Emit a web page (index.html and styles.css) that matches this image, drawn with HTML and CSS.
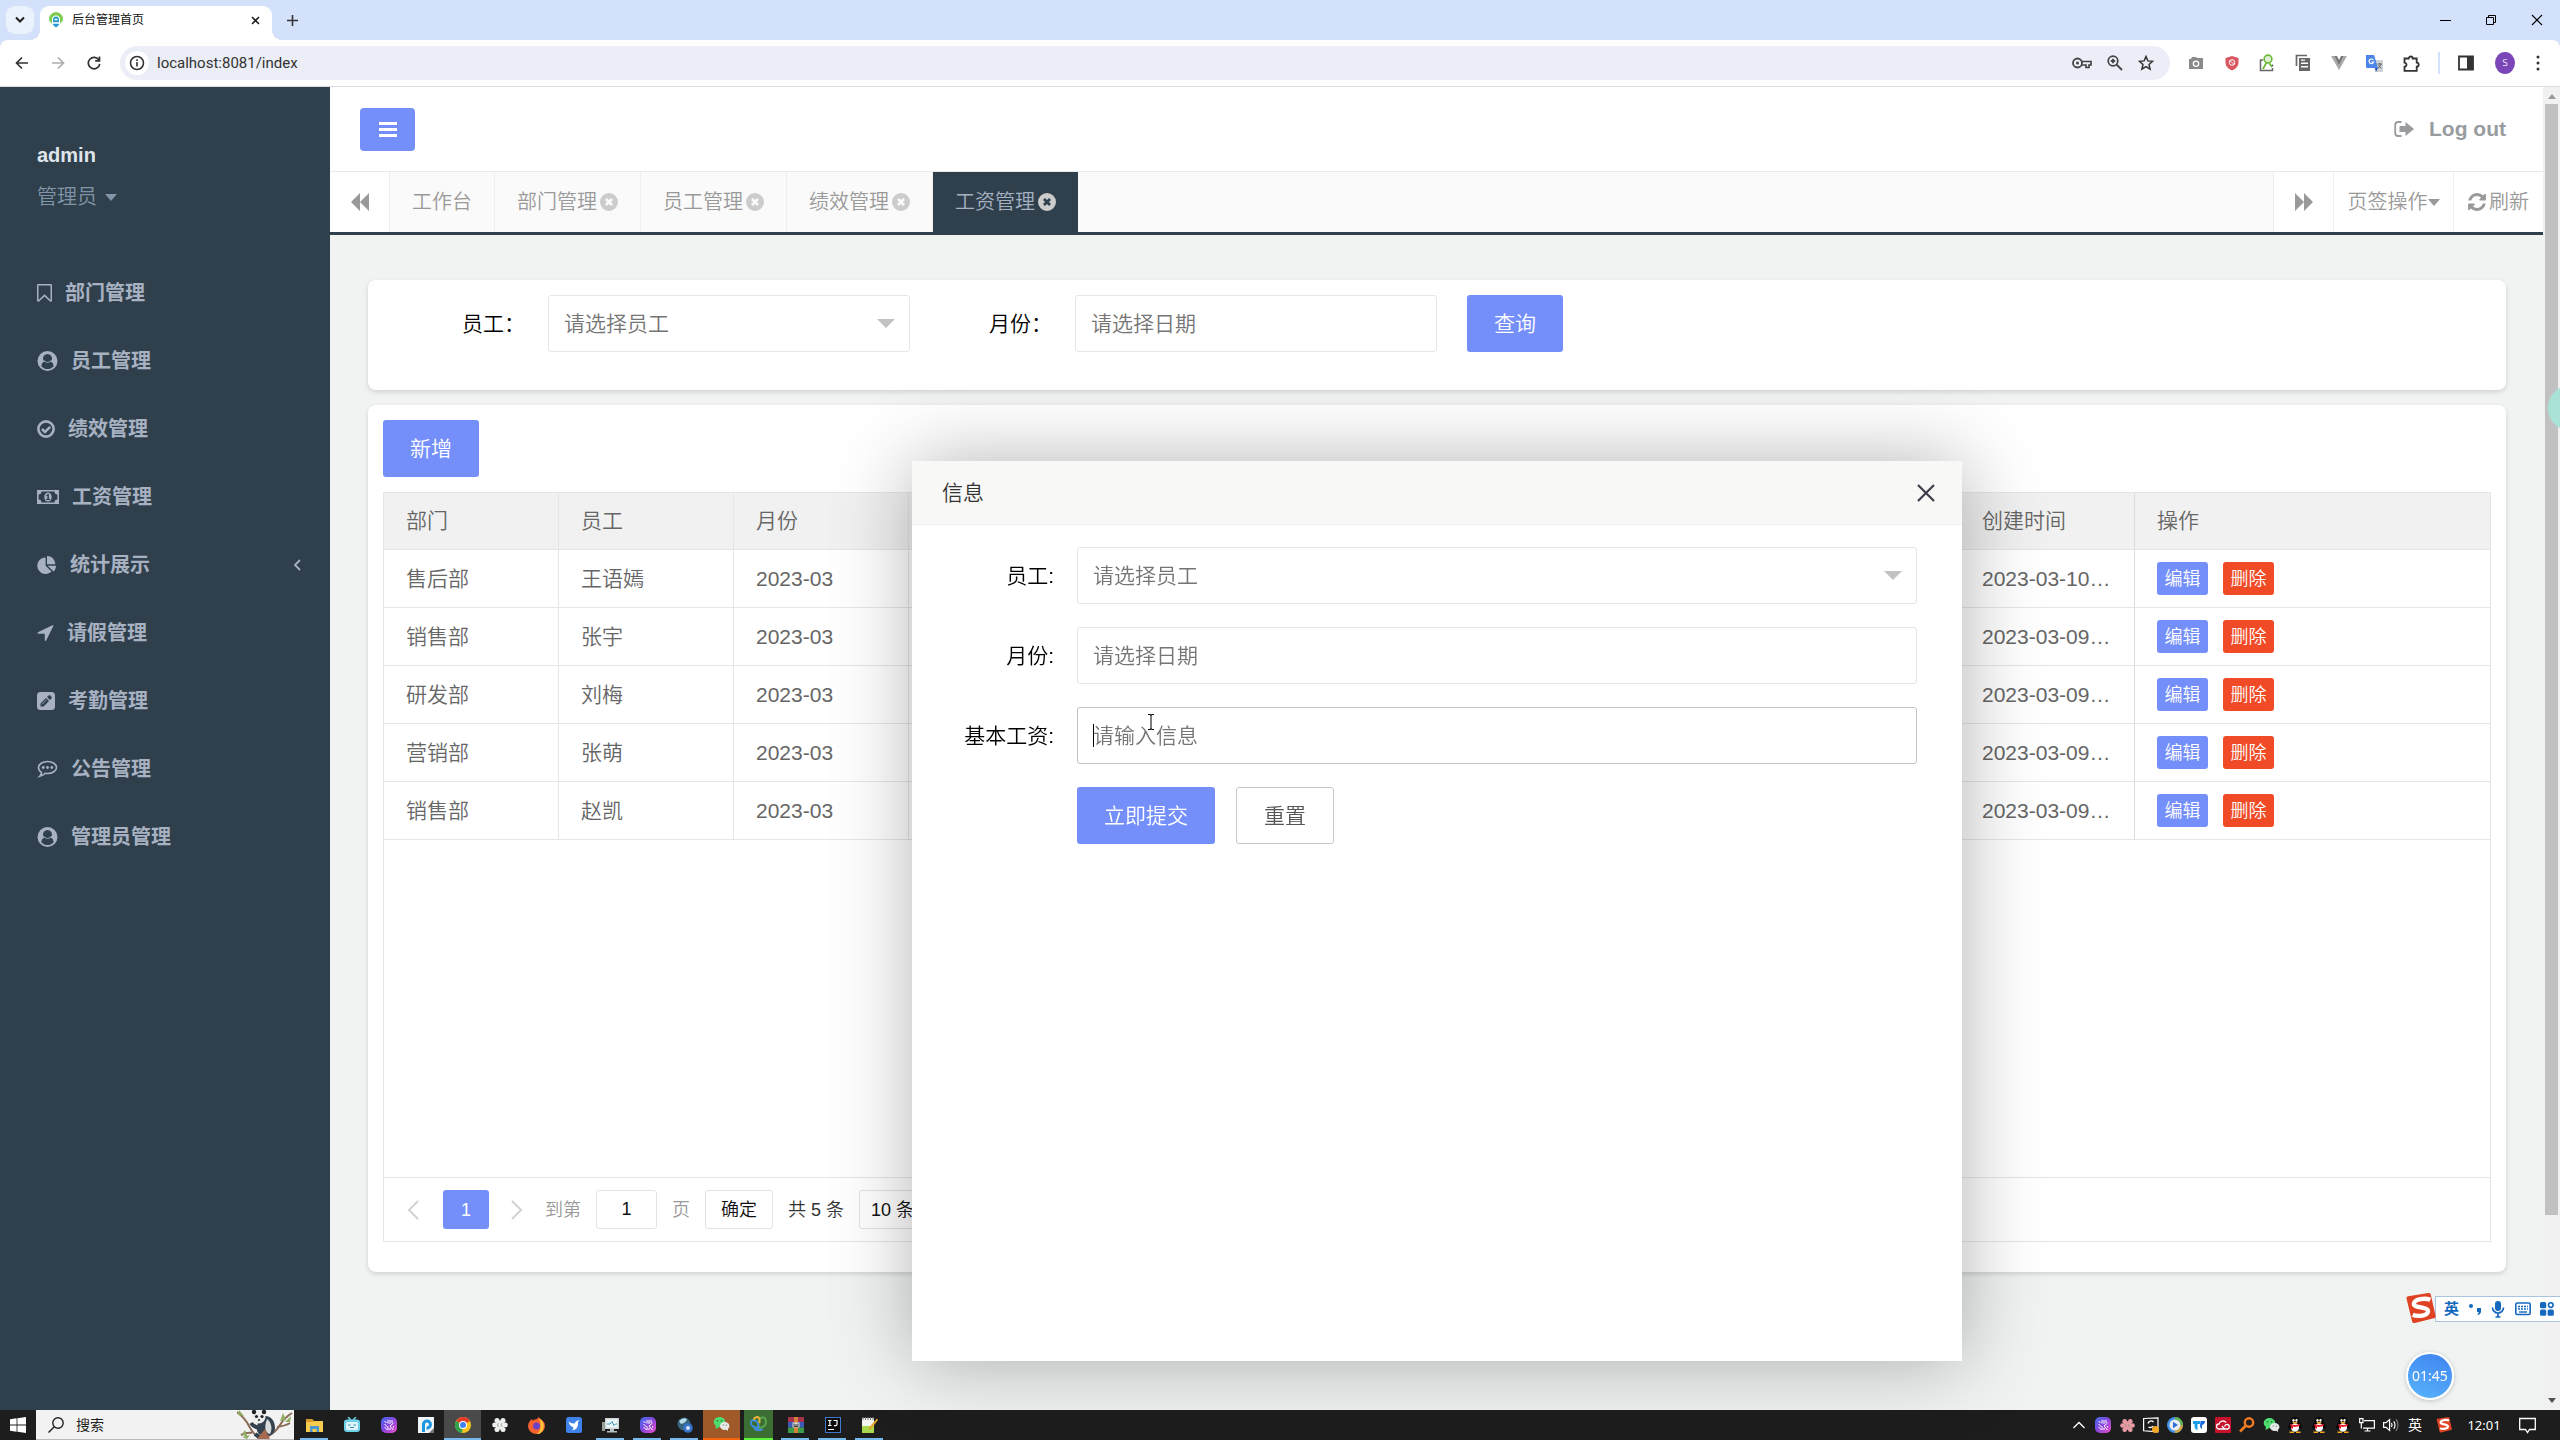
FILE: index.html
```html
<!DOCTYPE html>
<html lang="zh-CN">
<head>
<meta charset="utf-8">
<title>后台管理首页</title>
<link rel="stylesheet" href="styles.css">
</head>
<body>
<svg class="defs" aria-hidden="true">
  <symbol id="i-bookmark" viewBox="256 128 1280 1536"><path d="M1408 256h-1024v1242l423-406 89-85 89 85 423 406v-1242zm12-128q23 0 44 9 33 13 52.500 41t19.500 62v1289q0 34-19.500 62t-52.500 41q-19 8-44 8-48 0-83-32l-441-424-441 424q-36 33-83 33-23 0-44-9-33-13-52.500-41t-19.500-62v-1289q0-34 19.500-62t52.500-41q21-9 44-9h1048z"/></symbol>
  <symbol id="i-user" viewBox="0 0 20 20"><path fill-rule="evenodd" d="M10 0a10 10 0 1 1 0 20a10 10 0 0 1 0-20zM10 3a4.400 4.400 0 0 0-3.100 7.600C5 11.200 4 12.800 3.700 14.900a8 8 0 0 0 12.600 0C16 12.800 15 11.200 13.100 10.600A4.400 4.400 0 0 0 10 3z"/><path d="M3.800 14.800C4 12.500 5 11 6.800 10.500q3.200 2.600 6.400 0C15 11 16 12.500 16.200 14.800L17 13.500 15.500 10 13 9.500q-3 3-6 0L4.500 10 3 13.500z"/></symbol>
  <symbol id="i-check" viewBox="0 0 18 18"><circle cx="9" cy="9" r="7.600" fill="none" stroke="currentColor" stroke-width="2.600"/><path d="M5 9l3 3 5.200-5.200" fill="none" stroke="currentColor" stroke-width="2.500"/></symbol>
  <symbol id="i-money" viewBox="0 0 22 14"><path fill-rule="evenodd" d="M0 0h22v14H0zM4.500 1.600A3 3 0 0 1 1.600 4.500v5A3 3 0 0 1 4.500 12.400h13a3 3 0 0 1 2.900-2.900v-5A3 3 0 0 1 17.500 1.600z"/><path fill-rule="evenodd" d="M11 2.400c2.400 0 3.700 2.200 3.700 4.600s-1.300 4.600-3.700 4.600S7.300 9.400 7.300 7 8.600 2.400 11 2.400zM10.600 4L9 5.400l.7.8.7-.5v3H9.200V10h3.800V8.700h-1.100V4z"/></symbol>
  <symbol id="i-pie" viewBox="0 0 1792 1664"><path d="M768 890l546 546q-106 108-247.500 168t-298.500 60q-209 0-385.500-103t-279.500-279.500-103-385.500 103-385.500 279.500-279.500 385.500-103v762zm187 6h773q0 157-60 298.500t-168 247.500zm709-128h-768v-768q209 0 385.500 103t279.500 279.500 103 385.500z"/></symbol>
  <symbol id="i-arrow" viewBox="190 250 1410 1420"><path d="M1593 349l-640 1280q-17 35-57 35-5 0-15-2-22-5-35.500-22.500t-13.500-39.500v-576h-576q-22 0-39.500-13.500t-22.500-35.500 4-42 29-30l1280-640q13-7 29-7 27 0 45 19 15 14 18.500 34.500t-6.500 39.500z"/></symbol>
  <symbol id="i-pencil" viewBox="0 0 18 18"><path fill-rule="evenodd" d="M3.500 0h11A3.500 3.500 0 0 1 18 3.500v11a3.500 3.500 0 0 1-3.500 3.500h-11A3.500 3.500 0 0 1 0 14.500v-11A3.500 3.500 0 0 1 3.500 0zM3.500 11.500v3h3l5.500-5.500-3-3zM9.900 5.100l3 3 1.800-1.800q.5-.5 0-1L13 3.300q-.5-.5-1 0z"/><path d="M5 12.300l4.500-4.500" fill="none" stroke="currentColor" stroke-width=".8"/></symbol>
  <symbol id="i-comment" viewBox="0 0 21 18"><path d="M10.500 1.500c5 0 9 2.700 9 6s-4 6-9 6q-1.200 0-2.300-.2Q6 15.500 2.800 16.300q1.600-1.600 1.700-3.900C2.600 11.200 1.500 9.500 1.500 7.500c0-3.300 4-6 9-6z" fill="none" stroke="currentColor" stroke-width="1.600"/><circle cx="6.200" cy="7.500" r="1.400"/><circle cx="10.500" cy="7.500" r="1.400"/><circle cx="14.800" cy="7.500" r="1.400"/></symbol>
  <symbol id="i-close" viewBox="0 0 18 18"><path fill-rule="evenodd" d="M9 0a9 9 0 1 1 0 18A9 9 0 0 1 9 0zM5 6.900L7.100 9 5 11.100 6.900 13 9 10.900 11.100 13 13 11.100 10.900 9 13 6.900 11.100 5 9 7.100 6.900 5z"/></symbol>
  <symbol id="i-rewind" viewBox="0 0 18 18"><path d="M9 0v18L0 9zM18 0v18L9 9z"/></symbol>
  <symbol id="i-forward" viewBox="0 0 18 18"><path d="M0 0v18l9-9zM9 0v18l9-9z"/></symbol>
  <symbol id="i-refresh" viewBox="120 120 1550 1550"><path d="M1639 1056q0 5-1 7-64 268-268 434.500t-478 166.500q-146 0-282.500-55t-243.500-157l-129 129q-19 19-45 19t-45-19-19-45v-448q0-26 19-45t45-19h448q26 0 45 19t19 45-19 45l-137 137q71 66 161 102t187 36q134 0 250-65t186-179q11-17 53-117 8-23 30-23h192q13 0 22.500 9.500t9.500 22.500zm25-800v448q0 26-19 45t-45 19h-448q-26 0-45-19t-19-45 19-45l138-138q-148-137-349-137-134 0-250 65t-186 179q-11 17-53 117-8 23-30 23h-199q-13 0-22.500-9.500t-9.500-22.500v-7q65-268 270-434.500t480-166.500q146 0 284 55.500t245 156.500l130-129q19-19 45-19t45 19 19 45z"/></symbol>
  <symbol id="i-signout" viewBox="0 0 20 16"><path d="M7.500 1H4.200A3 3 0 0 0 1.200 4v8a3 3 0 0 0 3 3h3.300" fill="none" stroke="currentColor" stroke-width="1.800"/><path d="M5.500 5h6V1L20 8l-8.500 7v-4h-6z"/></symbol>
  <symbol id="i-purple" viewBox="0 0 16 16"><linearGradient id="pg" x1="0" y1="0" x2="1" y2="1"><stop offset="0" stop-color="#3f6df2"/><stop offset=".5" stop-color="#8a45dd"/><stop offset="1" stop-color="#f050c8"/></linearGradient><rect width="16" height="16" rx="5" fill="url(#pg)"/><path d="M3.500 4l2 2M3.500 7l3 3M3.500 10l3 3M7 3v3.500M9 3v4M11 3v3M7 9.500V13M12.500 6L9 9l3.500 4M12.500 9v1.500M9 11v2" fill="none" stroke="#fff" stroke-width="1"/></symbol>
  <symbol id="i-wechat" viewBox="0 0 16 16"><ellipse cx="6" cy="6" rx="5.800" ry="5" fill="#4fdc6e"/><path d="M2.500 9L2 13l4-2z" fill="#4fdc6e"/><ellipse cx="11.200" cy="10" rx="4.700" ry="4" fill="#e8e8e8"/><path d="M12 13l2.500 2V12z" fill="#e8e8e8"/><g fill="#1c6e35"><circle cx="4" cy="4.800" r=".8"/><circle cx="8" cy="4.800" r=".8"/><circle cx="9.800" cy="9" r=".6"/><circle cx="12.800" cy="9" r=".6"/></g></symbol>
  <symbol id="i-qq" viewBox="0 0 16 16"><path d="M8 0c3 0 4.300 2 4.300 5 1.500 1.800 2.700 4.500 2.300 6.500-.3 1-1.300-.3-1.600-1L3 10.500c-.3.700-1.300 2-1.600 1C1 9.500 2.200 6.800 3.700 5 3.700 2 5 0 8 0z" fill="#050505"/><ellipse cx="8" cy="10.500" rx="4" ry="4.300" fill="#fff"/><path d="M3.300 6.800q4.700 2.400 9.400 0v2q-4.700 2.300-9.400 0zM4 8.500h2v3H4z" fill="#e8202a"/><ellipse cx="6.500" cy="3.300" rx="1.100" ry="1.500" fill="#fff"/><ellipse cx="9.500" cy="3.300" rx="1.100" ry="1.500" fill="#fff"/><ellipse cx="8" cy="5.600" rx="2.600" ry=".9" fill="#f7a922"/><path d="M2.500 14.500h4.500V16H2.500zM9 14.500h4.500V16H9z" fill="#f7a922"/></symbol>
  <symbol id="i-flower" viewBox="0 0 16 16"><circle cx="8" cy="8" r="4.500"/><circle cx="5" cy="3.600" r="2.500"/><circle cx="11" cy="3.600" r="2.500"/><circle cx="13.400" cy="8" r="2.400"/><circle cx="11" cy="12.400" r="2.500"/><circle cx="5" cy="12.400" r="2.500"/><circle cx="2.600" cy="8" r="2.400"/><path d="M7 6.500a1.500 1.500 0 1 0 0 3M10.500 6.500a1.500 1.500 0 1 0 0 3" fill="none" stroke="#8a9a90" stroke-width=".8"/></symbol>
  <symbol id="i-sogou" viewBox="0 0 30 30"><path d="M1.500 5.500Q1 3.500 3 3.200L22.500 0q2-.3 2.500 1.600L29.600 22q.4 2-1.600 2.500L9.500 29q-2 .5-2.600-1.500z" fill="#df4323"/><path d="M24.500 6.500C20 4.800 9.500 5.200 8.600 10.200 8 15 22 13 22.300 17.500 22.500 22 12 23.300 7.500 21" fill="none" stroke="#fff" stroke-width="4.200"/></symbol>
</svg>

<header class="browser">
  <div class="tabstrip">
    <button class="tab-search" aria-label="搜索标签页"><svg width="10" height="8" viewBox="0 0 10 8"><path d="M1 1.500l4 4 4-4" fill="none" stroke="#1f1f1f" stroke-width="2"/></svg></button>
    <div class="browser-tab">
      <svg width="16" height="16" viewBox="0 0 16 16"><path d="M8 0a7 7 0 0 1 6.800 8.500L12 12V7.500a4 4 0 0 0-8 0V12L1.200 8.500A7 7 0 0 1 8 0z" fill="#7fcb4c"/><path d="M8 4.500a3 3 0 0 1 3 3V13l-3 2.500L5 13V7.500a3 3 0 0 1 3-3z" fill="#2a9cd0"/><path d="M6.500 7.500h3M5 11h6" stroke="#fff" stroke-width="1.500"/></svg>
      <span class="browser-tab-title">后台管理首页</span>
      <button class="plain" aria-label="关闭"><svg width="9" height="9" viewBox="0 0 9 9"><path d="M1 1l7 7M8 1L1 8" stroke="#222" stroke-width="1.600"/></svg></button>
    </div>
    <button class="plain new-tab" aria-label="新标签页"><svg width="11" height="11" viewBox="0 0 11 11"><path d="M5.500 0v11M0 5.500h11" stroke="#333" stroke-width="1.600"/></svg></button>
    <div class="window-buttons">
      <button class="plain" aria-label="最小化"><svg width="12" height="12" viewBox="0 0 12 12"><path d="M1 6.500h11" stroke="#000"/></svg></button>
      <button class="plain" aria-label="还原"><svg width="12" height="12" viewBox="0 0 12 12"><path d="M1.500 3.500h7v7h-7zM3.500 3V1.500h7v7H9" fill="none" stroke="#000"/></svg></button>
      <button class="plain" aria-label="关闭窗口"><svg width="12" height="12" viewBox="0 0 12 12"><path d="M1 1l10 10M11 1L1 11" stroke="#000" stroke-width="1.100"/></svg></button>
    </div>
  </div>
  <div class="toolbar">
    <div class="nav-buttons">
      <button class="plain" aria-label="后退"><svg width="14" height="14" viewBox="0 0 14 14"><path d="M13 7H2M7 1.500L1.500 7 7 12.500" fill="none" stroke="#333" stroke-width="1.700"/></svg></button>
      <button class="plain" aria-label="前进"><svg width="14" height="14" viewBox="0 0 14 14"><path d="M1 7h11M7 1.500L12.500 7 7 12.500" fill="none" stroke="#adadad" stroke-width="1.700"/></svg></button>
      <button class="plain" aria-label="刷新"><svg width="14" height="14" viewBox="0 0 14 14"><path d="M12 4.300A5.700 5.700 0 1 0 12.700 7.800M12.500.5v4.300H8.200" fill="none" stroke="#333" stroke-width="1.700"/></svg></button>
    </div>
    <div class="omnibox">
      <span class="info"><svg width="16" height="16" viewBox="0 0 16 16"><circle cx="8" cy="8" r="6.500" fill="none" stroke="#333" stroke-width="1.600"/><path d="M8 7v4.500M8 4.300v1.600" stroke="#333" stroke-width="1.600"/></svg></span>
      <input class="url" type="text" value="localhost:8081/index" aria-label="地址">
      <div class="omni-icons">
        <svg width="20" height="14" viewBox="0 0 20 14"><circle cx="5.500" cy="7" r="4.500" fill="none" stroke="#444" stroke-width="1.800"/><circle cx="5.500" cy="7" r="1.500" fill="#444"/><path d="M10 5.500h9v3.500h-2v2.500h-3V9H10" fill="none" stroke="#444" stroke-width="1.700"/></svg>
        <svg width="16" height="16" viewBox="0 0 16 16"><circle cx="6" cy="6" r="4.800" fill="none" stroke="#444" stroke-width="1.700"/><path d="M9.500 9.500l5.500 5.500M6 3.800v4.400M3.800 6h4.400" stroke="#444" stroke-width="1.800"/></svg>
        <svg width="16" height="16" viewBox="0 0 16 16"><path d="M8 1.500l1.900 4.400 4.700.4-3.600 3.100 1.100 4.700L8 11.600l-4.100 2.500L5 9.400 1.400 6.300l4.700-.4z" fill="none" stroke="#333" stroke-width="1.500"/></svg>
      </div>
    </div>
    <div class="extensions">
      <svg width="16" height="16" viewBox="0 0 16 16"><path fill-rule="evenodd" fill="#8a8a8a" d="M1 4h2l1-2h4l1 1h6v11H1zM8 5.500a3.300 3.300 0 1 0 0 6.600 3.300 3.300 0 0 0 0-6.600z"/><circle cx="8" cy="8.800" r="2" fill="#8a8a8a"/></svg>
      <svg width="16" height="16" viewBox="0 0 16 16"><path d="M8 1l6.500 2v4.500q0 5-6.500 8-6.500-3-6.500-8V3z" fill="#d95560"/><circle cx="8" cy="7.500" r="2.800" fill="none" stroke="#fff"/><path d="M6 5.500l4 4" stroke="#fff"/></svg>
      <svg width="16" height="18" viewBox="0 0 16 18"><path d="M4 6H1.500v10.500h12V14M13.500 12.500v-2" fill="none" stroke="#666" stroke-width="1.500"/><circle cx="9" cy="5" r="3.900" fill="#dff0d0" stroke="#6cbb3c" stroke-width="1.600"/><path d="M7.500 8.500L4 15M10 9l3 4" stroke="#6cbb3c" stroke-width="1.800"/></svg>
      <svg width="16" height="18" viewBox="0 0 16 18"><path d="M1.500 12V1.500H12" fill="none" stroke="#666" stroke-width="1.700"/><path fill-rule="evenodd" fill="#666" d="M4 4h11v13H4zM6 8.500v1.500h7V8.500zM6 12v1.500h7V12zM6 5.500v1.300h4V5.500z"/></svg>
      <svg width="16" height="16" viewBox="0 0 16 16"><path d="M0 1h5l3 6 3-6h5L8 15z" fill="#aaa"/><path d="M3.500 1H6l2 4 2-4h2.500L8 10z" fill="#777"/></svg>
      <svg width="17" height="17" viewBox="0 0 17 17"><path d="M7 5h10v12H9z" fill="#cfd2d6"/><path d="M0 0h8l4 13H1q-1 0-1-1z" fill="#4b85e8"/><path d="M9 13h3l-2 4z" fill="#2b57b5"/><path d="M7.300 5A2.300 2.300 0 1 0 7.600 7H5.500" fill="none" stroke="#fff" stroke-width="1.200"/><path d="M11.500 9h4.500M13.700 8v1M15 9q-.8 3-3 4M12.500 10q1 2 3 3.500" fill="none" stroke="#666"/></svg>
      <svg width="17" height="17" viewBox="0 0 17 17"><path d="M1.500 3.500h4.200a2 2 0 1 1 4 0h4v4.200a2 2 0 1 1 0 4v4.200h-12.200v-4.200a2 2 0 0 0 0-4z" fill="none" stroke="#333" stroke-width="1.800"/></svg>
    </div>
    <div class="chrome-end">
      <svg width="16" height="16" viewBox="0 0 16 16"><path d="M1 1.500h14v13H1z" fill="none" stroke="#333" stroke-width="1.800"/><path d="M9 1.500h6v13H9z" fill="#333"/></svg>
      <span class="avatar">s</span>
      <svg width="4" height="16" viewBox="0 0 4 16" fill="#333"><circle cx="2" cy="2" r="1.500"/><circle cx="2" cy="8" r="1.500"/><circle cx="2" cy="14" r="1.500"/></svg>
    </div>
  </div>
</header>

<div class="viewport">
  <nav class="sidebar">
    <div class="profile">
      <strong>admin</strong>
      <button class="plain role">管理员<i class="caret"></i></button>
    </div>
    <a href="#"><svg width="15" height="18"><use href="#i-bookmark"/></svg>部门管理</a>
    <a href="#"><svg width="21" height="20"><use href="#i-user"/></svg>员工管理</a>
    <a href="#"><svg width="18" height="18"><use href="#i-check"/></svg>绩效管理</a>
    <a href="#"><svg width="22" height="14"><use href="#i-money"/></svg>工资管理</a>
    <a href="#"><svg width="20" height="18"><use href="#i-pie"/></svg>统计展示<svg class="fold" width="8" height="12" viewBox="0 0 8 12"><path d="M7 1L2 6l5 5" fill="none" stroke="#a7b1c2" stroke-width="1.800"/></svg></a>
    <a href="#"><svg width="17" height="16"><use href="#i-arrow"/></svg>请假管理</a>
    <a href="#"><svg width="18" height="18"><use href="#i-pencil"/></svg>考勤管理</a>
    <a href="#"><svg width="21" height="18"><use href="#i-comment"/></svg>公告管理</a>
    <a href="#"><svg width="21" height="20"><use href="#i-user"/></svg>管理员管理</a>
  </nav>

  <main class="main">
    <div class="topbar">
      <button class="btn toggle" aria-label="菜单"><svg width="18" height="15" viewBox="0 0 18 15"><path d="M0 0h18v3H0zM0 6h18v3H0zM0 12h18v3H0z" fill="#fff"/></svg></button>
      <a class="logout" href="#"><svg width="20" height="16"><use href="#i-signout"/></svg>Log out</a>
    </div>
    <div class="pagetabs">
      <button class="roll left" aria-label="向左"><svg width="18" height="18"><use href="#i-rewind"/></svg></button>
      <a href="#">工作台</a>
      <a href="#">部门管理<svg width="18" height="18"><use href="#i-close"/></svg></a>
      <a href="#">员工管理<svg width="18" height="18"><use href="#i-close"/></svg></a>
      <a href="#">绩效管理<svg width="18" height="18"><use href="#i-close"/></svg></a>
      <a href="#" class="active">工资管理<svg width="18" height="18"><use href="#i-close"/></svg></a>
      <span class="fill"></span>
      <button class="roll" aria-label="向右"><svg width="18" height="18"><use href="#i-forward"/></svg></button>
      <button class="roll ops">页签操作<i class="caret"></i></button>
      <button class="roll reload"><svg width="18" height="18"><use href="#i-refresh"/></svg>刷新</button>
    </div>

    <div class="content">
      <form class="card search">
        <label for="q-emp">员工：</label>
        <span class="select"><select class="field" id="q-emp"><option>请选择员工</option></select></span>
        <label for="q-month" class="second">月份：</label>
        <input class="field" id="q-month" type="text" placeholder="请选择日期">
        <button class="btn" type="button">查询</button>
      </form>

      <section class="card list">
        <button class="btn">新增</button>
        <div class="grid">
          <table>
            <colgroup><col class="c"><col class="c"><col class="c"><col><col class="c"><col class="op"></colgroup>
            <thead><tr><th>部门</th><th>员工</th><th>月份</th><th></th><th>创建时间</th><th>操作</th></tr></thead>
            <tbody>
              <tr><td>售后部</td><td>王语嫣</td><td>2023-03</td><td></td><td>2023-03-10…</td><td><button class="mini">编辑</button><button class="mini del">删除</button></td></tr>
              <tr><td>销售部</td><td>张宇</td><td>2023-03</td><td></td><td>2023-03-09…</td><td><button class="mini">编辑</button><button class="mini del">删除</button></td></tr>
              <tr><td>研发部</td><td>刘梅</td><td>2023-03</td><td></td><td>2023-03-09…</td><td><button class="mini">编辑</button><button class="mini del">删除</button></td></tr>
              <tr><td>营销部</td><td>张萌</td><td>2023-03</td><td></td><td>2023-03-09…</td><td><button class="mini">编辑</button><button class="mini del">删除</button></td></tr>
              <tr><td>销售部</td><td>赵凯</td><td>2023-03</td><td></td><td>2023-03-09…</td><td><button class="mini">编辑</button><button class="mini del">删除</button></td></tr>
            </tbody>
          </table>
          <div class="pager">
            <button class="plain" aria-label="上一页"><svg width="12" height="20" viewBox="0 0 12 20"><path d="M11 1L2 10l9 9" fill="none" stroke="#d2d2d2" stroke-width="2"/></svg></button>
            <button class="current">1</button>
            <button class="plain" aria-label="下一页"><svg width="12" height="20" viewBox="0 0 12 20"><path d="M1 1l9 9-9 9" fill="none" stroke="#d2d2d2" stroke-width="2"/></svg></button>
            <label for="goto">到第</label>
            <input id="goto" type="text" value="1">
            <span class="unit">页</span>
            <button class="go">确定</button>
            <span class="total">共 5 条</span>
            <select aria-label="每页条数"><option>10 条/页</option></select>
          </div>
        </div>
      </section>
    </div>
  </main>

  <div class="scrollbar"><i class="up"></i><i class="thumb"></i><i class="down"></i></div>
  <i class="side-handle"></i>
</div>

<div class="dialog" role="dialog" aria-labelledby="dlg-title">
  <div class="dialog-head">
    <span id="dlg-title">信息</span>
    <button class="plain" aria-label="关闭"><svg width="18" height="18" viewBox="0 0 18 18"><path d="M1 1l16 16M17 1L1 17" stroke="#3d3c48" stroke-width="2.200"/></svg></button>
  </div>
  <form class="dialog-form">
    <label for="d-emp">员工:</label>
    <span class="select"><select class="field" id="d-emp"><option>请选择员工</option></select></span>
    <label for="d-month">月份:</label>
    <input class="field" id="d-month" type="text" placeholder="请选择日期">
    <label for="d-pay">基本工资:</label>
    <span class="focus"><input class="field" id="d-pay" type="text" placeholder="请输入信息"><i class="text-caret"></i>
      <svg class="pointer" width="8" height="16" viewBox="0 0 8 16"><path d="M1 .5h2.500q.5 0 .5 1 0-1 .5-1H7M4 1v14M1 15.500h2.500q.5 0 .5-1 0 1 .5 1H7" fill="none" stroke="#000"/></svg></span>
    <div class="actions"><button class="btn" type="button">立即提交</button><button class="btn ghost" type="reset">重置</button></div>
  </form>
</div>

<div class="ime">
  <svg class="ime-logo" width="31" height="31"><use href="#i-sogou"/></svg>
  <b>英</b>
  <svg width="14" height="12" viewBox="0 0 14 12" fill="#1468be"><circle cx="3" cy="3" r="2"/><path d="M9 5h4v3q0 3-3 4l-.6-1q1.300-.6 1.400-2H9z"/></svg>
  <svg width="14" height="18" viewBox="0 0 14 18"><rect x="4" y="1" width="6" height="10" rx="3" fill="#1468be"/><path d="M1.500 7.500a5.500 5.500 0 0 0 11 0M7 13v4M4.500 17h5" fill="none" stroke="#1468be" stroke-width="1.700"/></svg>
  <svg width="16" height="14" viewBox="0 0 16 14"><rect x=".8" y="1" width="14.400" height="11.500" rx="1.500" fill="none" stroke="#1468be" stroke-width="1.600"/><path d="M3 4.500h10M3 7h10" stroke="#1468be" stroke-width="1.500" stroke-dasharray="2 1"/><path d="M4 10h8" stroke="#1468be" stroke-width="1.400"/></svg>
  <svg width="14" height="14" viewBox="0 0 14 14" fill="#1468be"><rect width="6.200" height="6.200" rx="1.500"/><rect y="7.600" width="6.200" height="6.200" rx="1.500"/><rect x="7.600" y="7.600" width="6.200" height="6.200" rx="1.500"/><circle cx="10.800" cy="3.100" r="2.300" fill="none" stroke="#1468be" stroke-width="1.600"/></svg>
</div>
<div class="timer">01:45</div>

<footer class="taskbar">
  <button class="plain start" aria-label="开始"><svg width="16" height="16" viewBox="0 0 16 16" fill="#fff"><path d="M0 2.200l6.600-.9v6.300H0zM7.400 1.200L16 0v7.600H7.400zM0 8.400h6.600v6.300L0 13.800zM7.400 8.400H16V16l-8.600-1.200z"/></svg></button>
  <label class="find">
    <svg width="16" height="16" viewBox="0 0 16 16"><circle cx="10" cy="6" r="5.200" fill="none" stroke="#222" stroke-width="1.400"/><path d="M6.300 9.700L.5 15.500" stroke="#222" stroke-width="1.500"/></svg>
    <input type="text" placeholder="搜索">
    <svg width="56" height="29" viewBox="0 0 56 29"><path d="M0 2q8 6 12 14t10 12M4 25q6-3 11-2M55 3q-8 5-12 12T30 27M40 17q8-1 13-4" fill="none" stroke="#8a6a55" stroke-width="2"/><path d="M2 0l5 6-6-1zM8 20l3 8-6-4zM46 3l3 7-6 1zM54 6l-6 6h5zM5 27l8-2-3 4z" fill="#8fae62"/><path d="M28 6c7 0 10 6 10 12 0 5-4 8-9 8-7 0-10-4-9-9 1-6 3-11 8-11z" fill="#34424f"/><path d="M30 9c4 3 6 9 3 15-5-1-6-7-3-15z" fill="#d8dde0"/><circle cx="22" cy="7" r="6.500" fill="#eceeed"/><circle cx="17" cy="2" r="2.200" fill="#222"/><circle cx="27" cy="2" r="2.200" fill="#222"/><circle cx="19.500" cy="6.500" r="1.600" fill="#222"/><circle cx="25" cy="6.500" r="1.600" fill="#222"/><circle cx="22" cy="10" r="1" fill="#222"/><path d="M14 13q4 6 12 4M18 24q5 4 10 5" fill="none" stroke="#34424f" stroke-width="4"/><path d="M20 29l8-10 5 10z" fill="#a86a50"/></svg>
  </label>
  <div class="apps">
    <span class="app run"><svg width="17" height="15" viewBox="0 0 17 15"><path d="M0 1h6l2 2h9v11H0z" fill="#f7cb4d"/><path d="M0 1h6l2 3H0z" fill="#d99a2b"/><path d="M4 8h9v6h-2.500v-3h-4v3H4z" fill="#4a97d2"/></svg></span>
    <span class="app"><svg width="16" height="16" viewBox="0 0 16 16"><path d="M4 0l3 3M12 0L9 3" stroke="#6fd0ea" stroke-width="1.500"/><rect y="2.500" width="16" height="12.500" rx="3" fill="#6fd0ea"/><rect x="2" y="5" width="12" height="8" rx="1.500" fill="#dff4fa"/><path d="M4 8h2.500M9.500 8H12M6 10.500h4" stroke="#3a9ab8" stroke-width="1.200"/></svg></span>
    <span class="app"><svg width="16" height="16"><use href="#i-purple"/></svg></span>
    <span class="app"><svg width="16" height="16" viewBox="0 0 16 16"><path d="M0 0h16v16H0z" fill="#eef4f8"/><path d="M11 16l5-5v5z" fill="#777"/><path d="M5.500 15V7M5.500 8a3.500 3.500 0 1 1 3 3" fill="none" stroke="#1d97e0" stroke-width="3"/></svg></span>
    <span class="app run active"><svg width="16" height="16" viewBox="0 0 16 16"><circle cx="8" cy="8" r="8" fill="#f9c51d"/><path d="M8 8L1.100 4A8 8 0 0 1 15 4z" fill="#e33b2e"/><path d="M8 8l-1 8A8 8 0 0 1 1.100 4z" fill="#2fa24c"/><circle cx="8" cy="8" r="4" fill="#fff"/><circle cx="8" cy="8" r="3" fill="#3f80ee"/></svg></span>
    <span class="app"><svg width="16" height="16" fill="#eef0ee"><use href="#i-flower"/></svg></span>
    <span class="app"><svg width="17" height="17" viewBox="0 0 17 17"><path d="M2 4L3.500 2l1 1.500Q7 2 9 2L10.500 0q1 2 3.500 3 3 2.500 3 6a8.500 8 0 0 1-17 0Q0 6 2 4z" fill="#f8622f"/><path d="M11 1q6 4 4.500 10T9 17Q15 12 11 1z" fill="#fbc23a"/><circle cx="8.500" cy="9" r="3.500" fill="#6a42c8"/></svg></span>
    <span class="app"><svg width="16" height="16" viewBox="0 0 16 16"><rect width="16" height="16" rx="2.500" fill="#3f83ea"/><path d="M2.500 4.500q3 2.500 6 2Q9.500 3.500 13.500 3l-1.500 2q1 7-6 8.500 1.500-1.500 1.500-3Q3.500 9 2.500 4.500z" fill="#fff"/></svg></span>
    <span class="app run"><svg width="17" height="16" viewBox="0 0 17 16"><path d="M0 5h3v9H0z" fill="#96a096"/><path d="M3 1h14v11H3z" fill="#cfd6d6"/><path d="M4.500 2.500h11v8h-11z" fill="#eef8fb"/><path d="M5 7h3l2-2.500 2 4 1.500-1.500H15" fill="none" stroke="#3892b8"/><path d="M8 12h4v2h3v1.500H5V14h3z" fill="#b9c0c0"/></svg></span>
    <span class="app run"><svg width="16" height="16"><use href="#i-purple"/></svg></span>
    <span class="app run"><svg width="16" height="16" viewBox="0 0 16 16"><circle cx="7" cy="7" r="6.500" fill="#37657d"/><path d="M2 4q4-4 8-2-1 4-6 5z" fill="#b9dbe6"/><circle cx="11" cy="11" r="4.800" fill="#3572c8"/><circle cx="11" cy="11" r="2" fill="#d5e6fa"/></svg></span>
    <span class="app alert"><svg width="17" height="16"><use href="#i-wechat"/></svg></span>
    <span class="app green"><svg width="17" height="16" viewBox="0 0 17 16" fill="none" stroke-width="2"><path d="M9 12Q8 2 12 1.500T16 6q0 5-7 6" stroke="#5aa54c"/><path d="M8 12Q1 11 1 7t5-2q3 2 2 7z" stroke="#3e8ce0"/><path d="M4 4q0-3 4-3 2 1 1.500 6" stroke="#e3b13c"/><path d="M4 12q4 4 9 1" stroke="#3e8ce0"/></svg></span>
    <span class="app run"><svg width="16" height="16" viewBox="0 0 16 16"><path d="M0 0h16v5H0z" fill="#a8324e"/><path d="M0 5h16v5.500H0z" fill="#3a5cb8"/><path d="M0 10.500h16V16H0z" fill="#3b9a4c"/><path d="M6 0h4v16H6z" fill="#d8813a"/><path d="M4.500 5.500h7v5h-7z" fill="#dedede"/><path d="M6 6.500v3h4v-3M8 7v2" fill="none" stroke="#333"/></svg></span>
    <span class="app run"><svg width="16" height="16" viewBox="0 0 16 16"><rect x=".5" y=".5" width="15" height="15" fill="#0b0b0b" stroke="#3f78c8"/><path d="M3 3.500h3.500M3 8.500h3.500M4.800 3.500v5M8.500 3.500H12v4q0 1.200-1.500 1.200H9M3 12.500h6" fill="none" stroke="#fff" stroke-width="1.200"/></svg></span>
    <span class="app run"><svg width="17" height="16" viewBox="0 0 17 16"><path d="M1 1h12v15H1z" fill="#f2f4ee"/><path d="M1 9h12v7H1z" fill="#a8d84c"/><path d="M2 0v3M4.500 0v3M7 0v3M9.500 0v3M12 0v3" stroke="#777"/><path d="M16 1.500L8.500 10l-1 3 2.500-1L17 3z" fill="#e3a52c"/></svg></span>
  </div>
  <div class="tray">
    <span><svg width="12" height="8" viewBox="0 0 12 8"><path d="M.5 7L6 1.500 11.500 7" fill="none" stroke="#fff" stroke-width="1.300"/></svg></span>
    <span><svg width="16" height="16"><use href="#i-purple"/></svg></span>
    <span><svg width="15" height="15" fill="#e89aa4"><use href="#i-flower"/></svg></span>
    <span><svg width="16" height="16" viewBox="0 0 16 16"><path d="M.6 1.500L15 .8v14l-14.400-1z" fill="none" stroke="#fff" stroke-width="1.200"/><path d="M10.500 5A3.200 3.200 0 0 0 5 6.500M5.500 10A3.200 3.200 0 0 0 10 9" fill="none" stroke="#fff" stroke-width="1.300"/><circle cx="12.500" cy="12.500" r="3.500" fill="#f5a623"/></svg></span>
    <span><svg width="16" height="16" viewBox="0 0 16 16"><circle cx="8" cy="8" r="6.800" fill="#e9eef5" stroke="#4291e6" stroke-width="2.400"/><path d="M8 1.200A6.800 6.800 0 0 1 14.800 8" fill="none" stroke="#67b34a" stroke-width="2.400"/><path d="M8 14.800A6.800 6.800 0 0 0 14.800 8" fill="none" stroke="#d9a83a" stroke-width="2.400"/><path d="M6 4.800l5 3.200-5 3.200z" fill="#2f6ed0"/></svg></span>
    <span><svg width="16" height="16" viewBox="0 0 16 16"><rect width="16" height="16" rx="3" fill="#fff"/><path d="M2 4h7v3H6.500v6q-3-1-3-4V7H2z" fill="#19a0e8"/><path d="M9.500 4H14q0 3-3 4v4q-2-1-2-3z" fill="#1769e0"/></svg></span>
    <span><svg width="16" height="16" viewBox="0 0 16 16"><rect width="16" height="16" rx="1" fill="#c5112c"/><path d="M4 12a2.500 2.500 0 0 1 0-5 4 4 0 0 1 7-1.500M4 12h8.500a2.300 2.300 0 0 0 0-4.500q-2-.5-3 2M7 9l2.500 3" fill="none" stroke="#fff" stroke-width="1.300"/></svg></span>
    <span><svg width="16" height="16" viewBox="0 0 16 16"><circle cx="10" cy="5.500" r="4.200" fill="none" stroke="#ef7b22" stroke-width="2.400"/><path d="M7 8.500L1 14.500" stroke="#ef7b22" stroke-width="2.600"/></svg></span>
    <span><svg width="17" height="16"><use href="#i-wechat"/></svg></span>
    <span><svg width="16" height="16"><use href="#i-qq"/></svg></span>
    <span><svg width="16" height="16"><use href="#i-qq"/></svg></span>
    <span><svg width="16" height="16"><use href="#i-qq"/></svg></span>
    <span><svg width="16" height="14" viewBox="0 0 16 14" fill="none" stroke="#fff" stroke-width="1.200"><path d="M5 2.600h10.400v7.500H4M.6.600H4v4H.6zM2.300 4.600v6M8.500 10v3M5.500 13h6"/></svg></span>
    <span><svg width="16" height="14" viewBox="0 0 16 14" fill="none" stroke="#fff" stroke-width="1.200"><path d="M.6 4.600h2.500L6.600 1.500v11L3.100 9.400H.6zM8.500 5q1.200 2 0 4M10.800 3.200q2.400 3.800 0 7.600"/><path d="M13 1.200q4 5.800 0 11.600" stroke="#777"/></svg></span>
    <span class="lang">英</span>
    <span class="sogou"><svg width="16" height="16"><use href="#i-sogou"/></svg></span>
    <time>12:01</time>
    <span class="notice"><svg width="17" height="17" viewBox="0 0 17 17"><path d="M.7 1.500h15.600v11H10.500L8.500 15.500 6.500 12.500H.7z" fill="none" stroke="#fff" stroke-width="1.300"/></svg></span>
  </div>
</footer>
</body>
</html>
```

FILE: styles.css
```css
* { box-sizing: border-box; }
body {
  margin: 0;
  height: 100vh;
  display: flex;
  flex-direction: column;
  overflow: hidden;
  font-family: "Liberation Sans", "Noto Sans CJK SC", sans-serif;
  font-size: 21px;
  line-height: 30px;
  font-weight: 350;
  color: #666;
  fill: currentColor;
  background: #f1f3f3;
}
button, input, select { font: inherit; color: inherit; margin: 0; }
a { color: inherit; text-decoration: none; }
svg { display: block; flex: none; }
.defs { position: absolute; width: 0; height: 0; }
.plain { border: 0; padding: 0; background: none; display: flex; align-items: center; justify-content: center; }

/* browser frame */
.browser { flex: none; background: #d4e1fb; font-family: "Noto Sans", "Noto Sans CJK SC", sans-serif; }
.tabstrip { height: 40px; display: flex; align-items: center; padding-left: 6px; }
.tab-search { width: 28px; height: 28px; border: 0; padding: 0; border-radius: 9px; background: #eaf2fd; display: flex; align-items: center; justify-content: center; }
.browser-tab { position: relative; align-self: flex-end; height: 34px; width: 232px; margin-left: 6px; padding: 0 12px 6px 8px; display: flex; align-items: center; border-radius: 9px 9px 0 0; background: #fff; }
.browser-tab::before, .browser-tab::after { content: ""; position: absolute; bottom: 0; width: 10px; height: 10px; }
.browser-tab::before { left: -10px; background: radial-gradient(circle at 0 0, transparent 10px, #fff 10px); }
.browser-tab::after { right: -10px; background: radial-gradient(circle at 100% 0, transparent 10px, #fff 10px); }
.browser-tab-title { flex: 1; margin-left: 8px; font-size: 12px; font-weight: 400; color: #111; }
.new-tab { margin-left: 15px; }
.window-buttons { margin-left: auto; display: flex; }
.window-buttons button { width: 46px; height: 40px; }
.toolbar { height: 47px; display: flex; align-items: center; background: #fff; border-radius: 8px 8px 0 0; border-bottom: 1px solid #d9dde2; }
.nav-buttons { display: flex; padding-left: 4px; width: 120px; }
.nav-buttons button { width: 36px; height: 34px; }
.omnibox { flex: 1; height: 34px; border-radius: 17px; background: #ebeef6; display: flex; align-items: center; padding: 0 16px 0 5px; }
.info { width: 24px; height: 24px; border-radius: 50%; background: #fff; display: flex; align-items: center; justify-content: center; }
.url { flex: 1; border: 0; padding: 0; margin-left: 8px; background: none; font: 400 15px/24px Roboto, sans-serif; color: #333; }
.omni-icons { display: flex; align-items: center; gap: 15px; }
.extensions { display: flex; align-items: center; justify-content: space-between; width: 232px; margin-left: 18px; }
.chrome-end { display: flex; align-items: center; justify-content: space-between; width: 102px; margin: 0 20px 0 18px; padding-left: 18px; border-left: 2px solid #d4e1fb; }
.avatar { width: 20px; height: 22px; border-radius: 50%; background: #7b46b8; color: #fff; font-size: 12px; line-height: 20px; text-align: center; }

/* page shell */
.viewport { position: relative; flex: 1; min-height: 0; display: flex; overflow: hidden; }
.sidebar { flex: none; width: 330px; background: #2f404c; color: #a7b1c2; font-size: 20px; font-weight: 700; }
.profile { display: flex; flex-direction: column; align-items: flex-start; padding: 53px 37px 47px; gap: 12px; }
.profile strong { color: #dfe4ed; }
.role { font-weight: 350; color: #8095a8; }
.caret { border: 6px solid transparent; border-top: 7px solid; border-bottom: 0; }
.role .caret { margin-left: 8px; }
.sidebar a { display: flex; align-items: center; height: 68px; padding: 0 29px 0 37px; gap: 13px; }
.fold { margin-left: auto; }
.main { flex: 1; min-width: 0; }
.topbar { height: 85px; display: flex; align-items: center; justify-content: space-between; padding: 0 37px 0 30px; background: #fff; border-bottom: 1px solid #e7eaec; }
.btn { height: 57px; border: 0; border-radius: 3px; padding: 0 27px; background: #758ffa; color: #fff; }
.toggle { width: 55px; height: 43px; border-radius: 4px; padding: 0; display: flex; align-items: center; justify-content: center; }
.logout { display: flex; align-items: center; gap: 15px; font-weight: 700; color: #999c9e; }
.pagetabs { display: flex; height: 63px; background: #fafafa; border-bottom: 3px solid #2f404c; font-size: 20px; color: #999; }
.pagetabs a { display: flex; align-items: center; gap: 3px; padding: 0 22px; border-right: 1px solid #eee; }
.pagetabs a svg { color: #ccc; }
.pagetabs .active { background: #2f404c; color: #a7b1c2; border-right: 0; }
.fill { flex: 1; }
.roll { width: 60px; border: 0; border-left: 1px solid #eee; padding: 0; background: #fff; display: flex; align-items: center; justify-content: center; }
.roll.left { border-left: 0; border-right: 1px solid #eee; }
.roll.ops { width: 120px; }
.roll.reload { width: 90px; gap: 3px; }
.content { padding: 45px 37px 0 38px; display: flex; flex-direction: column; gap: 15px; }
.card { background: #fff; border-radius: 8px; box-shadow: 0 2px 5px rgba(0, 0, 0, .14); }

/* fields */
.field { width: 100%; height: 57px; border: 1px solid #e6e6e6; border-radius: 3px; background: #fff; padding: 0 15px; color: #757575; outline: 0; appearance: none; }
.field::placeholder { color: #757575; opacity: 1; }
.select { position: relative; display: block; }
.select::after { content: ""; position: absolute; right: 15px; top: 24px; border: 9px solid transparent; border-top-color: #c2c2c2; border-bottom: 0; }
label { color: #000; }
.search { display: flex; align-items: flex-start; padding: 15px 15px 38px 94px; }
.search label { width: 86px; line-height: 57px; }
.search .second { margin-left: 79px; }
.search .select, .search input { width: 362px; }
.search .btn { margin-left: 30px; }

/* grid */
.list { padding: 15px 15px 30px; }
.list > .btn { display: block; }
.grid { margin-top: 15px; border: 1px solid #e6e6e6; }
table { width: 100%; table-layout: fixed; border-spacing: 0; }
.c { width: 175px; }
.op { width: 355px; }
th, td { height: 58px; padding: 0 22px; border: solid #e6e6e6; border-width: 0 1px 1px 0; text-align: left; font-weight: 350; white-space: nowrap; }
th { height: 57px; background: #f1f1f1; }
th:last-child, td:last-child { border-right: 0; }
th:nth-child(5), td:nth-child(5) { border-right-color: #dcdcdc; }
.mini { height: 33px; width: 51px; border: 0; border-radius: 3px; padding: 0; background: #758ffa; color: #fff; font-size: 18px; vertical-align: middle; }
.del { margin-left: 15px; background: #f04a26; }
.pager { display: flex; align-items: center; height: 64px; margin-top: 337px; padding: 0 23px; border-top: 1px solid #e6e6e6; font-size: 18px; color: #999; }
.pager button, .pager input, .pager select { height: 39px; }
.pager .current { width: 46px; margin: 0 22px 0 24px; border: 0; border-radius: 3px; background: #758ffa; color: #fff; }
.pager label { margin: 0 15px 0 22px; color: #999; }
.pager input { width: 61px; border: 1px solid #e2e2e2; border-radius: 3px; text-align: center; color: #111; }
.unit { margin: 0 15px; }
.go { width: 68px; border: 1px solid #e2e2e2; border-radius: 3px; padding: 0; background: #fff; color: #111; }
.total { margin: 0 15px; color: #333; }
.pager select { width: 110px; border: 1px solid #e2e2e2; border-radius: 3px; padding: 0 11px; background: #fff; color: #111; appearance: none; }

/* scrollbar */
.scrollbar { flex: none; width: 17px; background: #f1f1f1; display: flex; flex-direction: column; align-items: center; padding: 7px 0 7px; }
.up { border: 4px solid transparent; border-bottom: 5px solid #9a9a9a; border-top: 0; }
.thumb { width: 13px; flex: 0 1 1111px; margin: 5px 0 auto; background: #c1c1c1; }
.down { border: 4px solid transparent; border-top: 5px solid #505050; border-bottom: 0; }
.side-handle { position: absolute; right: -34px; top: 298px; width: 46px; height: 46px; border-radius: 50%; background: #a9e3d8; }

/* dialog */
.dialog { position: fixed; left: 912px; top: 461px; width: 1050px; height: 900px; background: #fff; box-shadow: 1px 1px 75px rgba(0, 0, 0, .3); }
.dialog-head { display: flex; align-items: center; justify-content: space-between; height: 64px; padding: 0 27px 0 30px; background: #f8f8f7; border-bottom: 1px solid #eee; color: #333; }
.dialog-form { display: grid; grid-template-columns: 142px 1fr; column-gap: 23px; row-gap: 23px; padding: 22px 45px 0 0; }
.dialog-form label { line-height: 57px; text-align: right; }
.focus { position: relative; }
.focus .field { border-color: #c2c2c2; }
.text-caret { position: absolute; left: 16px; top: 17px; width: 1px; height: 23px; background: #000; }
.pointer { position: absolute; left: 70px; top: 7px; }
.actions { grid-column: 2; display: flex; gap: 21px; }
.ghost { background: #fff; border: 1px solid #c9c9c9; color: #555; }

/* floating tools */
.ime { position: fixed; right: 0; bottom: 118px; height: 26px; width: 125px; display: flex; align-items: center; justify-content: space-between; padding: 0 6px 0 8px; background: #fff; border: 1px solid #a9c4e0; border-right: 0; color: #1468be; font-size: 15px; }
.ime b { font-weight: 700; }
.ime-logo { position: absolute; left: -31px; top: -4px; }
.timer { position: fixed; left: 2406px; top: 1352px; width: 48px; height: 48px; border: 2px solid #fff; border-radius: 50%; background: linear-gradient(200deg, #3f83f2, #58b4fa); color: #fff; font: 400 14px/44px "Noto Sans", sans-serif; text-align: center; box-shadow: 0 1px 5px rgba(0, 0, 0, .2); }

/* taskbar */
.taskbar { flex: none; height: 30px; display: flex; background: #1d1d1d; color: #fff; font-family: "Noto Sans", "Noto Sans CJK SC", sans-serif; font-weight: 400; }
.start { width: 36px; }
.find { width: 258px; display: flex; align-items: center; padding: 0 1px 0 12px; background: #f2f2f2; border-bottom: 1px solid #bbb; }
.find input { flex: 1; min-width: 0; border: 0; padding: 0; margin-left: 12px; background: none; font-size: 14px; }
.find input::placeholder { color: #222; opacity: 1; }
.apps { display: flex; margin-left: 2px; }
.app { position: relative; width: 37px; display: flex; align-items: center; justify-content: center; }
.run::after { content: ""; position: absolute; left: 4px; right: 5px; bottom: 0; height: 2px; background: #76b9ed; }
.app.active { background: #4a4a4a; }
.app.active::after { left: 0; right: 0; }
.alert { background: #a05a2a; border-bottom: 2px solid #f7630c; }
.green { width: 29px; margin: 0 4px; background: #3c6e34; border-bottom: 2px solid #5cf53c; }
.tray { margin-left: auto; display: flex; align-items: center; padding-right: 13px; }
.tray span { width: 24px; display: flex; justify-content: center; }
.tray .lang { font-size: 14px; }
.tray .sogou { width: 34px; }
.tray time { width: 46px; text-align: center; font-size: 13px; }
.tray .notice { width: 40px; }
```
